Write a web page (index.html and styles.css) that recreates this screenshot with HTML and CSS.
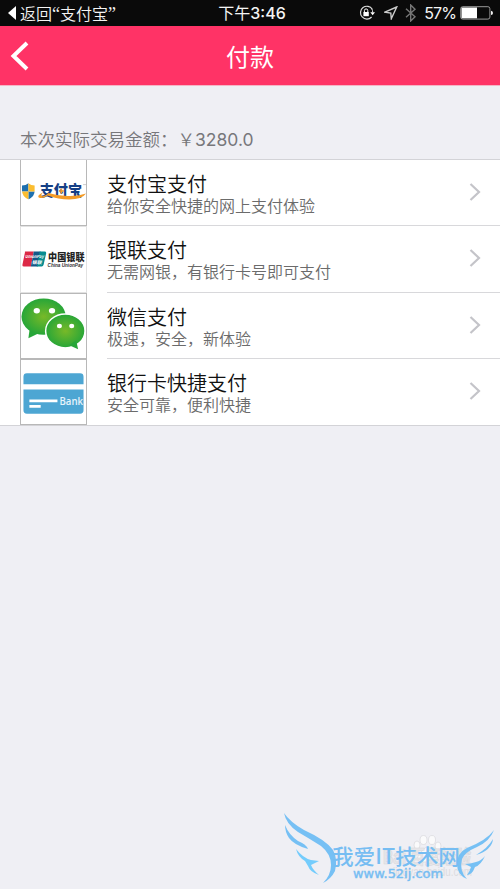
FILE: index.html
```html
<!DOCTYPE html>
<html lang="zh-CN">
<head>
<meta charset="utf-8">
<title>付款</title>
<link rel="stylesheet" href="styles.css">
</head>
<body>
<div class="screen">
  <header class="status">
    <div class="back-app"><svg width="9" height="14" viewBox="0 0 9 14"><path d="M8 0v14L0 7z" fill="#fff"/></svg><span class="back-label">返回<span class="quote">“</span>支付宝<span class="quote">”</span></span></div>
    <div class="clock"><span class="ampm">下午</span><span class="num">3:46</span></div>
    <div class="indicators">
      <svg class="lock" width="16" height="16" viewBox="0 0 16 16"><path d="M13.300 4.200A6.400 6.400 0 1 0 12.600 12" fill="none" stroke="#ddd" stroke-width="1.200"/><path d="M11.300 7.200H16l-2.300 3z" fill="#fff"/><path d="M13.700 7.500Q13.800 5.500 12.800 3.800" fill="none" stroke="#ddd"/><rect x="4.400" y="7" width="5.400" height="4.200" fill="#fff"/><path d="M5.400 7V5.600a1.700 1.700 0 0 1 3.400 0V7" fill="none" stroke="#fff"/></svg>
      <svg class="arrow" width="14" height="14" viewBox="0 0 14 14"><path d="M12.700 1L.8 6.200l6 .9.500 5.600z" fill="none" stroke="#ccc" stroke-width="1.400"/></svg>
      <svg class="bt" width="12" height="18" viewBox="0 0 12 18"><path d="M1 4.800l9 8L5.700 17V1L10 5.200l-9 8" fill="none" stroke="#777" stroke-width="1.400"/></svg>
      <span class="percent">57%</span>
      <svg class="battery" width="33" height="14" viewBox="0 0 33 14"><rect x=".7" y=".7" width="29.200" height="12.400" rx="2" fill="none" stroke="#999"/><rect x="1.500" y="1.500" width="15.500" height="10.800" fill="#fff"/><path d="M31 4.700q2 .4 2 2.200t-2 2.200z" fill="#eee"/></svg>
    </div>
  </header>
  <nav class="navbar">
    <svg class="nav-back" width="20" height="30" viewBox="0 0 20 30"><path d="M17 2L3.500 15 17 28" fill="none" stroke="#fff" stroke-width="4"/></svg>
    <h1>付款</h1>
  </nav>
  <p class="amount"><span>本次实际交易金额：</span><span class="sum"><span class="yen">￥</span>3280.0</span></p>
  <ul class="methods">
    <li>
      <div class="logo"><svg viewBox="0 0 66 66">
        <defs><clipPath id="shield"><path d="M1 26q4 0 6.500-2.400Q10 26 14 26v5q0 6-6.500 9Q1 37 1 31z"/></clipPath></defs>
        <g clip-path="url(#shield)"><path d="M0 23h7.500v9H0zM7.500 32H15v9H7.500z" fill="#1f70af"/><path d="M7.500 23H15v9H7.500zM0 32h7.500v9H0z" fill="#fbbd30"/></g>
        <text x="19" y="37" class="alipay" textLength="43" lengthAdjust="spacingAndGlyphs">支付宝</text>
        <path d="M22 33q-6 3-4 5 4 2 9-2 11 4 22 4 13 0 17-6-9 3-19 2.500-10 0-19-3-4 4-7 3-1-1 1-3.500z" fill="#f49b27"/>
        <path d="M41 29v5m-2.500-2.500h5" stroke="#f49b27" stroke-width="1.500"/>
        <path d="M63 25h3" stroke="#999" stroke-width=".5"/>
      </svg></div>
      <div class="info"><h2>支付宝支付</h2><p>给你安全快捷的网上支付体验</p></div>
      <svg class="chev" width="12" height="18" viewBox="0 0 12 18"><path d="M1.500 1l8.500 8-8.500 8"/></svg>
    </li>
    <li>
      <div class="logo pale"><svg viewBox="0 0 66 66">
        <path d="M4 25h9l-3 15H3q-2 0-1.500-2L4 26z" fill="#dc2946"/><path d="M13 25h7l-3 15h-7z" fill="#155787"/><path d="M19 25h5q2 0 1.500 2L23 38q-.4 2-2 2h-5z" fill="#078c90"/>
        <text x="4" y="32" class="up-mini" textLength="19" lengthAdjust="spacingAndGlyphs">UnionPay</text><text x="11" y="38" class="up-mini" textLength="10" lengthAdjust="spacingAndGlyphs">银联</text>
        <text x="27.500" y="34.500" class="up-cn" textLength="37" lengthAdjust="spacingAndGlyphs">中国银联</text><text x="27" y="40.200" class="up-en" textLength="36" lengthAdjust="spacingAndGlyphs">China UnionPay</text>
      </svg></div>
      <div class="info"><h2>银联支付</h2><p>无需网银，有银行卡号即可支付</p></div>
      <svg class="chev" width="12" height="18" viewBox="0 0 12 18"><path d="M1.500 1l8.500 8-8.500 8"/></svg>
    </li>
    <li>
      <div class="logo"><svg viewBox="0 1 66 66">
        <defs><radialGradient id="green"><stop stop-color="#78b928"/><stop offset="1" stop-color="#27a638"/></radialGradient></defs>
        <path d="M9 35L7.500 46l10-5z" fill="#27a638"/><ellipse cx="23" cy="24" rx="22.500" ry="18.500" fill="url(#green)"/>
        <ellipse cx="45" cy="38.500" rx="20" ry="17.200" fill="url(#green)" stroke="#fff" stroke-width="1.500"/><path d="M49 53l9 4-2-9z" fill="#27a638"/>
        <g fill="#fff"><ellipse cx="16" cy="18" rx="3.200" ry="2.700"/><ellipse cx="31.500" cy="18" rx="3.200" ry="2.700"/><ellipse cx="39" cy="33.500" rx="2.600" ry="2.200"/><ellipse cx="51.500" cy="33.500" rx="2.600" ry="2.200"/></g>
      </svg></div>
      <div class="info"><h2>微信支付</h2><p>极速，安全，新体验</p></div>
      <svg class="chev" width="12" height="18" viewBox="0 0 12 18"><path d="M1.500 1l8.500 8-8.500 8"/></svg>
    </li>
    <li>
      <div class="logo"><svg viewBox="0 0 66 66">
        <path d="M2.500 24.500V17q0-3.500 3.500-3.500h54q3.500 0 3.500 3.500v7.500zM2.500 30h61v21q0 3.500-3.500 3.500H6q-3.500 0-3.500-3.500z" fill="#4da6d3"/><path d="M8.500 41.500H37M8.500 47H20" stroke="#fff" stroke-width="2.800"/>
        <text x="39" y="46" class="bank" textLength="24" lengthAdjust="spacingAndGlyphs">Bank</text>
      </svg></div>
      <div class="info"><h2>银行卡快捷支付</h2><p>安全可靠，便利快捷</p></div>
      <svg class="chev" width="12" height="18" viewBox="0 0 12 18"><path d="M1.500 1l8.500 8-8.500 8"/></svg>
    </li>
  </ul>
  <svg class="watermark" width="240" height="89" viewBox="0 0 240 89">
    <g class="faint"><g fill="#fafafb" stroke="#d9d9dc" stroke-width=".7"><ellipse cx="157" cy="45" rx="3" ry="4"/><ellipse cx="163.500" cy="40" rx="3.500" ry="4.500"/><ellipse cx="172" cy="40" rx="3.500" ry="4.500"/><ellipse cx="178" cy="46" rx="3" ry="4"/><path d="M168 47q4 0 7 6 6 8-1 9h-13q-7-2-1-8 4-7 8-7z"/></g>
      <text x="123" y="64" class="baidu" textLength="88" lengthAdjust="spacingAndGlyphs">Bai 百度经验</text><text x="133" y="76" class="baidu-url" textLength="79" lengthAdjust="spacingAndGlyphs">jingyan.baidu.com</text></g>
    <g fill="#76c0f4"><path d="M24 13Q30 22 44 30 66 40 73 50 78 59 75 71 71 79 63 83 71 75 71 65 71 54 61 46 50 39 38 32 26 24 24 13z"/><path d="M25 25Q29 35 38 41 46 44 48 49 34 45 29 38 25 32 25 25z"/><path d="M36 49q7 9 15 11l8 1-8 4q2 5 8 10-9-3-11-9l-3-5q-7-4-9-12z" fill="#74ccfc"/>
      <path d="M234 30q-4 11-17 17-12 5-15 12-3 12 5 20-10-4-10-15 0-11 10-16 20-8 27-18zM233 39q-1 11-17 16 12-7 17-16zM225 56q-4 9-10 11-3 8-8 8 3-4 4-8l-6-3q5 0 11-2 5-1 9-6z"/></g>
    <text x="72" y="63.500" class="wm-name" textLength="128" lengthAdjust="spacingAndGlyphs">我爱IT技术网</text>
    <text x="93" y="77.500" class="wm-url" textLength="90" lengthAdjust="spacingAndGlyphs">www.52ij.com</text>
  </svg>
</div>
</body>
</html>
```
FILE: styles.css
```css
* { box-sizing: border-box; }
body, h1, h2, p, ul { margin: 0; padding: 0; }
body { background: #efeff4; font-family: Inter, "Noto Sans CJK SC", sans-serif; overflow: hidden; }
svg { display: block; flex: none; }
.screen { position: relative; width: 500px; height: 889px; }
.status { display: grid; grid-template-columns: 1fr auto 1fr; align-items: center; height: 26px; background: #0a0a0a; color: #f4f4f4; padding: 0 7px 0 8px; font-size: 16px; }
.back-app { display: flex; align-items: center; gap: 3px; white-space: nowrap; }
.back-label { font-family: "Noto Sans CJK SC", sans-serif; font-weight: 350; line-height: 26px; }
.quote { font-family: "Liberation Serif", serif; font-size: 18px; line-height: 1; }
.clock { white-space: nowrap; line-height: 26px; margin-left: 3px; }
.ampm { font-weight: 400; }
.num { font-weight: 500; }
.indicators { display: flex; align-items: center; justify-content: flex-end; }
.arrow { margin-left: 9px; }
.bt { margin-left: 7px; }
.percent { margin: 0 4px 0 7px; font-size: 16px; letter-spacing: -.9px; line-height: 26px; }
.navbar { display: grid; grid-template-columns: 30px 1fr 30px; align-items: center; height: 60px; background: #ff3366; padding: 0 10px; border-bottom: 1px solid #f5b5c5; color: #fff; }
.navbar h1 { text-align: center; font: 400 24px/59px "Noto Sans CJK SC", sans-serif; }
.amount { display: flex; align-items: flex-end; height: 73px; padding: 0 20px 6px; color: #77777b; font: 350 17.5px/26px Inter, "Noto Sans CJK SC", sans-serif; white-space: nowrap; }
.sum { font-weight: 400; }
.yen { font-weight: 350; }
.methods { list-style: none; background: #fff; border-top: 1px solid #d3d3d7; border-bottom: 1px solid #d3d3d7; height: 267px; display: grid; grid-template-rows: 66px 67px 66px 66px; }
.methods li { display: grid; grid-template-columns: 67px 1fr; column-gap: 20px; padding-left: 20px; position: relative; min-height: 0; }
.logo { border: 1px solid #b8b8b8; overflow: hidden; min-height: 0; }
li:first-child .logo { border-top: 0; }
.logo.pale { border-color: #e2e2e2; }
.logo svg { width: 65px; height: 65px; }
.info { border-bottom: 1px solid #d8d8db; padding-top: 10px; min-height: 0; white-space: nowrap; font-family: "Noto Sans CJK SC", sans-serif; }
li:last-child .info { border-bottom: 0; }
.info h2 { font-size: 20px; font-weight: 350; line-height: 27px; color: #111; }
.info p { font-size: 16px; font-weight: 350; line-height: 16px; color: #6b6b6b; }
.chev { position: absolute; right: 19px; top: 23px; fill: none; stroke: #c4c4c9; stroke-width: 2.2; }
.alipay { font: 900 15px "Noto Sans CJK SC", sans-serif; fill: #153f85; }
.up-mini { font: italic 700 4.5px "Noto Sans CJK SC", sans-serif; fill: #fff; }
.up-cn { font: 900 10px "Noto Sans CJK SC", sans-serif; fill: #222; }
.up-en { font: italic 700 5px "Liberation Sans", sans-serif; fill: #333; }
.bank { font: 600 11px "Open Sans", sans-serif; fill: #e7f4fb; }
.watermark { position: absolute; left: 260px; top: 800px; }
.baidu { font: 700 19px Inter, "Noto Sans CJK SC", sans-serif; fill: #e6e6ea; stroke: #d8d8db; stroke-width: .6px; }
.baidu-url { font: 12px "Liberation Sans", sans-serif; fill: #dcdce0; }
.wm-name { font: 500 21px "Noto Sans CJK SC", sans-serif; fill: #76bdf2; }
.wm-url { font: 12px "DejaVu Sans", sans-serif; fill: #76bdf2; stroke: #76bdf2; stroke-width: .4px; }
```
